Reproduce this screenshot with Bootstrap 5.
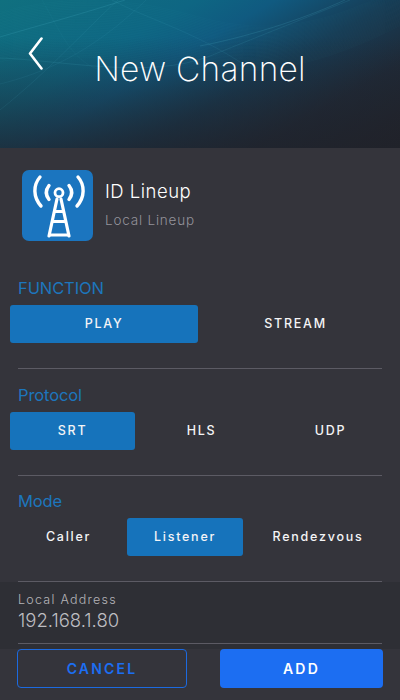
<!DOCTYPE html>
<html lang="en"><head><meta charset="utf-8"><title>New Channel</title>
<link href="https://cdn.jsdelivr.net/npm/bootstrap@5.3.0/dist/css/bootstrap.min.css" rel="stylesheet">
<style>
html,body{height:700px;overflow:hidden}
body{background:#34343b;font-family:"Inter","Liberation Sans",sans-serif;color:#fff;width:400px}
.hero{height:148px;background:linear-gradient(to bottom,rgba(32,34,42,0) 25%,rgba(32,34,42,.72) 100%),linear-gradient(150deg,#10707f 0%,#0e6683 30%,#105a80 42%,#173c55 60%,#1f2a38 78%,#212229 100%);overflow:hidden;display:grid;grid-template-columns:1fr auto 1fr}
.waves{position:absolute;inset:0;width:400px;height:148px}
.backbtn{margin:37px 0 0 28px;width:15px;height:33px;position:relative}
.hero-title{font-size:33.5px;font-weight:200;line-height:40px;margin:49px 0 0;position:relative;letter-spacing:.25px}
.app-row{padding:22px 0 0 22px;height:132px}
.app-tile{width:71px;height:71px;background:#1b75bf;border-radius:7px}
.app-name{font-size:18.5px;font-weight:300;line-height:22px;margin-top:10px;letter-spacing:.5px}
.app-sub{font-size:13.5px;font-weight:300;color:#93929a;line-height:18px;margin-top:9px;letter-spacing:.8px}
.sect-label{color:#1d76bd;font-size:16.5px;font-weight:400;line-height:18px;padding-left:18px;margin-top:-1px;margin-bottom:8px;letter-spacing:-.1px}
.seg{padding:0 7px 0 10px;display:grid}
.seg-2{grid-template-columns:188px 1fr}
.seg-3{grid-template-columns:125px 1fr 125px}
.seg-m{grid-template-columns:117px 116px 1fr}
.seg-btn{height:38px;border:0;border-radius:3px;background:transparent;color:#f4f4f6;font-size:12.5px;font-weight:500;letter-spacing:1.75px;padding:0}
.seg-btn.on{background:#1673bb}
.rule{height:1px;background:#5c5b64;margin:0 18px}
.r1{margin-top:25px;margin-bottom:18px}
.r2{margin-top:25px;margin-bottom:17px}
.r3{margin-top:25px}
.band{background:#2e2f35;height:67px}
.band-label{font-size:12.5px;font-weight:300;color:#b4b4b8;letter-spacing:1.25px;line-height:16px;padding:10px 18px 0}
.band-value{font-size:18.5px;font-weight:300;color:#bdbdc1;line-height:22px;padding:1px 18px 0;letter-spacing:0}
.band .rule{margin-top:12px}
.foot{padding:0 17px;justify-content:space-between}
.act{height:39px;border-radius:4px;font-size:14px;font-weight:600;letter-spacing:2.2px;padding:0}
.act-cancel{width:170px;background:transparent;border:1.5px solid #1c6ae0;color:#1c6ef2}
.act-add{width:163px;background:#1c6ef2;border:0;color:#fff}
</style></head><body>
<header class="hero position-relative">
<svg class="waves" id="waves" viewBox="0 0 400 148" fill="none" stroke="#5fc6de" stroke-width=".35"></svg>
<div><svg class="backbtn d-block" viewBox="0 0 15 33" fill="none" stroke="#fff" stroke-width="2.6" stroke-linecap="round" stroke-linejoin="round"><path d="M13.500 1.500 2 16.500l11.500 15"/></svg></div>
<h1 class="hero-title">New Channel</h1>
<div></div>
</header>
<main>
<section class="app-row d-flex gap-2">
<div class="app-tile flex-shrink-0"><svg width="71" height="71" viewBox="0 0 71 71" fill="none" stroke="#fff" stroke-linecap="round" stroke-linejoin="round"><g stroke-width="3.4"><path d="M18 7C11 15 11 27 19 36"/><path d="M56 7C63 15 63 27 55 36"/><path d="M27 15.500C23.500 20 23.500 25 27 29.500"/><path d="M47 15.500C50.500 20 50.500 25 47 29.500"/></g><circle cx="37" cy="22.700" r="4" stroke-width="2.800"/><path d="M35 29 27 66M39 29 47 66" stroke-width="3.200"/><path d="M33 41.500H41M31 51.500H43M28 65H46" stroke-width="3"/></svg></div>
<div class="ms-1"><div class="app-name">ID Lineup</div><div class="app-sub">Local Lineup</div></div>
</section>
<div class="sect-label">FUNCTION</div>
<div class="seg seg-2"><button class="seg-btn on">PLAY</button><button class="seg-btn">STREAM</button></div>
<div class="rule r1"></div>
<div class="sect-label">Protocol</div>
<div class="seg seg-3"><button class="seg-btn on">SRT</button><button class="seg-btn">HLS</button><button class="seg-btn">UDP</button></div>
<div class="rule r2"></div>
<div class="sect-label">Mode</div>
<div class="seg seg-m"><button class="seg-btn">Caller</button><button class="seg-btn on">Listener</button><button class="seg-btn">Rendezvous</button></div>
<div class="rule r3"></div>
<div class="band"><div class="band-label">Local Address</div><div class="band-value">192.168.1.80</div><div class="rule"></div></div>
<div class="foot d-flex"><button class="act act-cancel">CANCEL</button><button class="act act-add">ADD</button></div>
</main>
<script src="https://cdn.jsdelivr.net/npm/bootstrap@5.3.0/dist/js/bootstrap.bundle.min.js"></script>
<script>
(function(){
  var d='';
  function p(path,o,w){d+='<path d="'+path+'" stroke-opacity="'+o+'"'+(w?' stroke-width="'+w+'"':'')+'/>';}
  for(var i=0;i<34;i++){
    p('M0 '+(12+i*1.5)+'C70 '+(-6+i*1.7)+' 130 '+(-2+i*1.9)+' 195 '+(16+i*1.6)+'S320 '+(30+i*1.1)+' 400 '+(-14+i*1.2),.07);
  }
  p('M0 37C30 28 75 16 125 0',.3,.5);
  p('M0 110C50 70 85 30 118 0',.22,.4);
  p('M0 84C40 74 90 55 146 0',.18,.4);
  p('M0 58C60 60 150 80 210 56S300 20 350 0',.22,.5);
  p('M200 46C260 34 310 16 345 0',.3,.5);
  p('M112 0C150 20 190 30 240 62',.22,.4);
  p('M42 0C60 30 70 60 100 70',.12,.4);
  document.getElementById('waves').innerHTML=d;
})();
</script>
</body></html>
